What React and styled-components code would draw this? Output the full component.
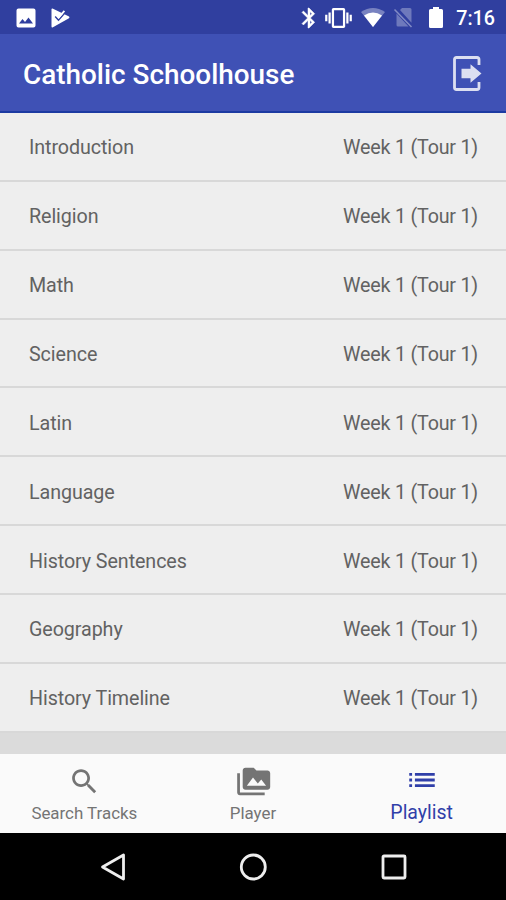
import React from "react";
import styled, { createGlobalStyle } from "styled-components";

const GlobalStyle = createGlobalStyle`
  * { box-sizing: border-box; }
  body { margin: 0; background: #000; font-family: Roboto, "Liberation Sans", sans-serif; }
`;

const Screen = styled.div`
  width: 506px;
  height: 900px;
  display: flex;
  flex-direction: column;
  overflow: hidden;
  background: #dbdbdb;
`;

const StatusBar = styled.header`
  height: 34px;
  flex: none;
  display: flex;
  align-items: center;
  justify-content: space-between;
  padding: 1px 11px 0 16px;
  background: #303f9f;
  color: #fff;
`;

const IconGroup = styled.div`
  display: flex;
  align-items: center;
  gap: ${(p) => p.$gap}px;
`;

const Clock = styled.time`
  font-size: 19.7px;
  font-weight: 500;
  line-height: 32px;
  margin-left: -3px;
  padding-top: 2px;
`;

const AppBar = styled.div`
  height: 79px;
  flex: none;
  display: flex;
  align-items: center;
  justify-content: space-between;
  padding: 2px 24px 0 23px;
  background: #3f51b5;
  border-bottom: 2px solid #1c3aa2;
  color: #fff;
`;

const Title = styled.h1`
  margin: 0;
  padding-top: 2px;
  font-size: 27.9px;
  font-weight: 500;
  line-height: 36px;
`;

const TrackList = styled.ul`
  list-style: none;
  margin: 0;
  padding: 0;
  flex: none;
  height: 619px;
  display: grid;
  grid-template-rows: repeat(9, 68.86px);
  background: #eee;
`;

const TrackRow = styled.li`
  display: flex;
  align-items: center;
  justify-content: space-between;
  padding: 4px 28px 0 29px;
  border-bottom: 2px solid #d8d8d8;
  color: #626262;
  font-size: 19.7px;
  line-height: 26px;
`;

const TrackName = styled.span`
  letter-spacing: -0.08px;
`;

const TrackWeek = styled.span`
  letter-spacing: -0.2px;
`;

const BottomNav = styled.nav`
  height: 79px;
  flex: none;
  margin-top: auto;
  display: grid;
  grid-template-columns: repeat(3, 1fr);
  background: #fafafa;
`;

const Tab = styled.div`
  display: flex;
  flex-direction: column;
  align-items: center;
  padding-top: ${(p) => (p.$active ? 9 : 11)}px;
  color: ${(p) => (p.$active ? "#303fa9" : "#747474")};
  font-size: ${(p) => (p.$active ? 19.5 : 16.9)}px;
  line-height: ${(p) => (p.$active ? 32 : 30)}px;
`;

const SystemNav = styled.footer`
  height: 67px;
  flex: none;
  display: flex;
  align-items: center;
  justify-content: center;
  gap: 112px;
  background: #000;
`;

const Svg = styled.svg`
  display: block;
  flex: none;
  overflow: visible;
`;

const Icon = ({ w, h, box = `0 0 ${w} ${h}`, children }) => (
  <Svg width={w} height={h} viewBox={box} fill="currentColor">{children}</Svg>
);

const tracks = [
  "Introduction", "Religion", "Math", "Science", "Latin",
  "Language", "History Sentences", "Geography", "History Timeline",
];

export default function App() {
  return (
    <>
      <GlobalStyle />
      <Screen>
        <StatusBar>
          <IconGroup $gap={15}>
            <Icon w={20} h={20}>
              <path fillRule="evenodd" d="M2.5 0.5h15a2 2 0 0 1 2 2v15a2 2 0 0 1-2 2h-15a2 2 0 0 1-2-2v-15a2 2 0 0 1 2-2zM3 15.5h14l-4.5-6-3.5 4.5-2.5-3z" />
            </Icon>
            <Icon w={19} h={20}>
              <path d="M1.5 .5L18 8.6Q19 9.4 18 10.2L1.5 19.5Q.5 19.8.5 18.5v-17Q.5.3 1.5.5z" />
              <path d="M4.2 8.5l3.3 3.7 8.2-9.4" fill="none" stroke="#303f9f" strokeWidth="1.5" />
              <path d="M5.5 6.8l2.3 2.5 5.6-6.5" fill="none" stroke="#fff" strokeWidth="1.8" />
            </Icon>
          </IconGroup>
          <IconGroup $gap={9}>
            <Icon w={14} h={20} box="5 2 14 20">
              <path stroke="currentColor" strokeWidth=".5" d="M17.71 7.71L12 2h-1v7.59L6.41 5 5 6.41 10.59 12 5 17.59 6.41 19 11 14.41V22h1l5.71-5.71-4.3-4.29 4.3-4.29zM13 5.83l1.88 1.88L13 9.59V5.83zm1.88 10.46L13 18.17v-3.76l1.88 1.88z" />
            </Icon>
            <Icon w={27} h={20} box="0 3 24 18">
              <path d="M0 15h2V9H0v6zm3 2h2V7H3v10zm19-8v6h2V9h-2zm-3 8h2V7h-2v10zM16.5 3h-9C6.67 3 6 3.67 6 4.5v15c0 .83.67 1.5 1.5 1.5h9c.83 0 1.5-.67 1.5-1.5v-15c0-.83-.67-1.5-1.5-1.5zM16 19H8V5h8v14z" />
            </Icon>
            <Icon w={24} h={19}>
              <path opacity=".35" d="M0 4Q12-4 24 4L12 19z" />
              <path d="M3 7.5Q12 1.5 21 7.5L12 19z" />
            </Icon>
            <Icon w={19} h={19}>
              <path opacity=".3" d="M8 0h8a1.5 1.5 0 0 1 1.5 1.5v13.2L6 2zM2.5 5.5L14.5 18.5H4a1.5 1.5 0 0 1-1.5-1.5z" />
              <path opacity=".4" d="M.5 1.5l17 17.5" fill="none" stroke="currentColor" strokeWidth="1.5" />
            </Icon>
            <Icon w={28} h={21}>
              <path d="M11 0h6v2h2.5Q21 2 21 3.5v16Q21 21 19.5 21h-11Q7 21 7 19.5v-16Q7 2 8.5 2H11z" />
            </Icon>
            <Clock>7:16</Clock>
          </IconGroup>
        </StatusBar>
        <AppBar>
          <Title>Catholic Schoolhouse</Title>
          <Icon w={29} h={35}>
            <g opacity=".82">
              <path d="M26 9V3.5Q26 1.5 24 1.5H3.5Q1.5 1.5 1.5 3.5v28Q1.5 33.5 3.5 33.5H24Q26 33.5 26 31.5V26" fill="none" stroke="currentColor" strokeWidth="2.8" />
              <path d="M8.5 12.8h9V8.2L28.5 17.5 17.5 26.8v-4.6h-9z" />
            </g>
          </Icon>
        </AppBar>
        <TrackList>
          {tracks.map((name) => (
            <TrackRow key={name}>
              <TrackName>{name}</TrackName>
              <TrackWeek>Week 1 (Tour 1)</TrackWeek>
            </TrackRow>
          ))}
        </TrackList>
        <BottomNav>
          <Tab>
            <Icon w={33} h={33} box="0 0 24 24">
              <path d="M15.5 14h-.79l-.28-.27C15.41 12.59 16 11.11 16 9.5 16 5.91 13.09 3 9.5 3S3 5.91 3 9.5 5.91 16 9.5 16c1.61 0 3.09-.59 4.23-1.57l.27.28v.79l5 4.99L20.49 19l-4.99-5zm-6 0C7.01 14 5 11.99 5 9.5S7.01 5 9.5 5 14 7.01 14 9.5 11.99 14 9.5 14z" />
            </Icon>
            <span>Search Tracks</span>
          </Tab>
          <Tab>
            <Icon w={34} h={33} box="-0.5 0 24 24">
              <path d="M2 6H0v5h.01L0 20c0 1.1.9 2 2 2h18v-2H2V6zm20-2h-8l-2-2H6c-1.1 0-1.99.9-1.99 2L4 16c0 1.1.9 2 2 2h16c1.1 0 2-.9 2-2V6c0-1.1-.9-2-2-2zM7 15l4.5-6 3.5 4.51 2.5-3.01L21 15H7z" />
            </Icon>
            <span>Player</span>
          </Tab>
          <Tab $active>
            <Icon w={34} h={34} box="0 0 24 24">
              <path d="M3 13h2v-2H3v2zm0 4h2v-2H3v2zm0-8h2V7H3v2zm4 4h14v-2H7v2zm0 4h14v-2H7v2zM7 7v2h14V7H7z" />
            </Icon>
            <span>Playlist</span>
          </Tab>
        </BottomNav>
        <SystemNav>
          <Icon w={28} h={28}>
            <path d="M24.5 2v24L3.5 14z" fill="none" stroke="#eee" strokeWidth="2.8" strokeLinejoin="round" />
          </Icon>
          <Icon w={28} h={28}>
            <circle cx="14.3" cy="14" r="12" fill="none" stroke="#eee" strokeWidth="2.8" />
          </Icon>
          <Icon w={28} h={28}>
            <rect x="4" y="3" width="22" height="22" rx="1" fill="none" stroke="#eee" strokeWidth="2.8" />
          </Icon>
        </SystemNav>
      </Screen>
    </>
  );
}
